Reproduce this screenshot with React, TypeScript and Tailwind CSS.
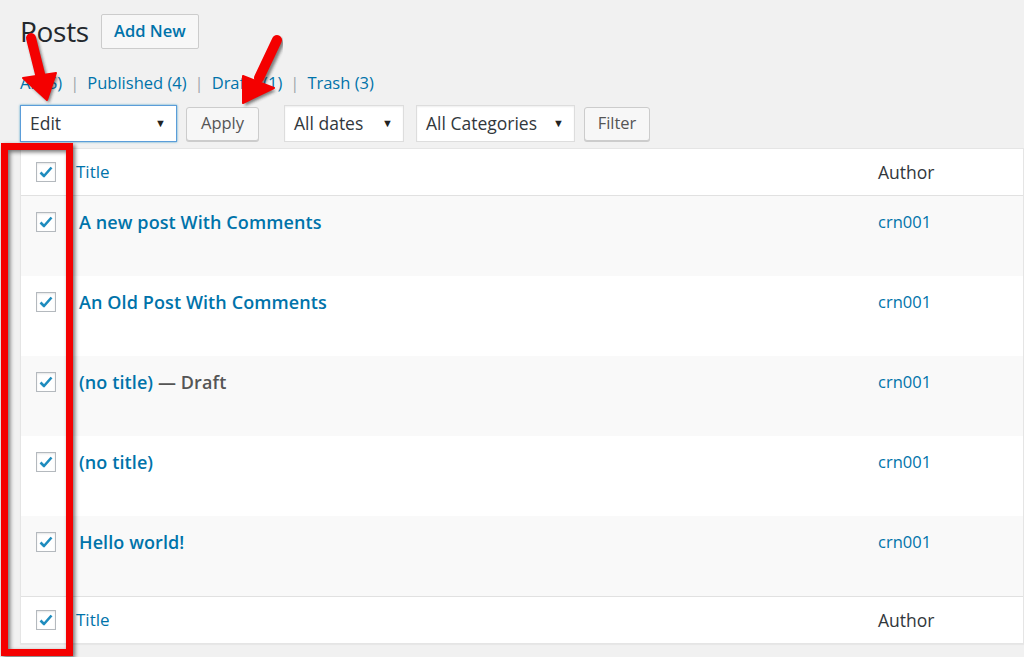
import React from 'react';

const posts = [
  { title: 'A new post With Comments', author: 'crn001' },
  { title: 'An Old Post With Comments', author: 'crn001' },
  { title: '(no title)', state: 'Draft', author: 'crn001' },
  { title: '(no title)', author: 'crn001' },
  { title: 'Hello world!', author: 'crn001' },
];

const Checkbox: React.FC = () => (
  <div className="w-[20px] h-[20px] bg-white border border-[#b4b9be] shadow-[inset_0_1px_2px_rgba(0,0,0,0.1)] flex items-center justify-center">
    <svg width="16" height="16" viewBox="0 0 16 16">
      <path d="M2.5 8.5 L6 12 L13.5 3.5" fill="none" stroke="#1e8cbe" strokeWidth="2.6" strokeLinejoin="round" />
    </svg>
  </div>
);

const Select: React.FC<{ label: string; width: string; focused?: boolean }> = ({ label, width, focused }) => (
  <div
    className={`${width} h-[37px] bg-white flex items-center justify-between pl-[9px] pr-[10px] text-[17.5px] text-[#32373c] ${
      focused ? 'border border-[#5b9dd9] shadow-[0_0_2px_rgba(30,140,190,0.8)]' : 'border border-[#ddd] shadow-[inset_0_1px_2px_rgba(0,0,0,0.07)]'
    }`}
  >
    <span>{label}</span>
    <span className="text-[11px] text-[#222]">▼</span>
  </div>
);

const Button: React.FC<{ label: string; width: string }> = ({ label, width }) => (
  <div className={`${width} h-[34px] bg-[#f7f7f7] border border-[#ccc] rounded-[3px] shadow-[0_1px_0_#ccc] flex items-center justify-center text-[16.5px] text-[#555]`}>
    {label}
  </div>
);

const Arrow: React.FC<{ shaft: string; head: string }> = ({ shaft, head }) => (
  <g>
    <g transform="translate(2,3)" opacity="0.55" filter="url(#blur)">
      <path d={shaft} stroke="#222" strokeWidth="10" strokeLinecap="round" fill="none" />
      <path d={head} fill="#222" />
    </g>
    <path d={shaft} stroke="#f40000" strokeWidth="10" strokeLinecap="round" fill="none" />
    <path d={head} fill="#f40000" stroke="#f40000" strokeWidth="2" strokeLinejoin="round" />
  </g>
);

export default function App() {
  return (
    <div className="relative w-[1024px] h-[657px] overflow-hidden bg-[#f1f1f1] font-['Open_Sans',sans-serif]">
      <div className="pl-[20px] pt-[13px]">
        <div className="flex items-center gap-[12px] h-[36px]">
          <h1 className="text-[28px] leading-none text-[#23282d] tracking-[-0.3px]">Posts</h1>
          <div className="h-[35px] w-[98px] flex items-center justify-center bg-[#f7f7f7] border border-[#ccc] rounded-[2px] text-[16.5px] font-semibold text-[#0073aa]">
            Add New
          </div>
        </div>

        <div className="mt-[22px] flex items-center text-[16.5px] text-[#0073aa] h-[24px]">
          <span>All (5)</span>
          <span className="mx-[8px] text-[#a0a5aa]">|</span>
          <span>Published (4)</span>
          <span className="mx-[8px] text-[#a0a5aa]">|</span>
          <span>Drafts (1)</span>
          <span className="mx-[8px] text-[#a0a5aa]">|</span>
          <span>Trash (3)</span>
        </div>

        <div className="mt-[10px] flex items-center h-[37px]">
          <Select label="Edit" width="w-[157px]" focused />
          <div className="ml-[9px]">
            <Button label="Apply" width="w-[73px]" />
          </div>
          <div className="ml-[25px]">
            <Select label="All dates" width="w-[120px]" />
          </div>
          <div className="ml-[12px]">
            <Select label="All Categories" width="w-[159px]" />
          </div>
          <div className="ml-[9px]">
            <Button label="Filter" width="w-[66px]" />
          </div>
        </div>

        <div className="mt-[6px] bg-white border border-[#e5e5e5] shadow-[0_1px_1px_rgba(0,0,0,0.04)]">
          <div className="h-[47px] flex items-center border-b border-[#e1e1e1]">
            <div className="w-[55px] pl-[15px]">
              <Checkbox />
            </div>
            <div className="flex-1 text-[17px] text-[#0073aa]">Title</div>
            <div className="w-[145px] text-[17.5px] text-[#32373c]">Author</div>
          </div>

          {posts.map((p, i) => (
            <div key={i} className={`h-[80px] flex items-start pt-[14px] ${i % 2 === 0 ? 'bg-[#f9f9f9]' : 'bg-white'}`}>
              <div className="w-[58px] pl-[15px] pt-[2px]">
                <Checkbox />
              </div>
              <div className="flex-1 text-[18px] font-semibold text-[#0073aa] leading-[24px] tracking-[0.1px]">
                {p.title}
                {p.state && <span className="text-[#555]"> — {p.state}</span>}
              </div>
              <div className="w-[145px] text-[16.5px] text-[#0073aa] leading-[24px]">{p.author}</div>
            </div>
          ))}

          <div className="h-[47px] flex items-center border-t border-[#e1e1e1]">
            <div className="w-[55px] pl-[15px]">
              <Checkbox />
            </div>
            <div className="flex-1 text-[17px] text-[#0073aa]">Title</div>
            <div className="w-[145px] text-[17.5px] text-[#32373c]">Author</div>
          </div>
        </div>
      </div>

      {/* annotations */}
      <div className="absolute left-[1px] top-[143px] w-[72px] h-[513px] border-[7px] border-[#f40000] drop-shadow-[2px_2px_2px_rgba(0,0,0,0.55)]" />
      <svg className="absolute left-0 top-0 pointer-events-none" width="1024" height="657">
        <defs>
          <filter id="blur">
            <feGaussianBlur stdDeviation="1.5" />
          </filter>
        </defs>
        <Arrow shaft="M31 38 L41 78" head="M23 78 L56 73 L47 100 Z" />
        <Arrow shaft="M277 40 L259 78" head="M243 76 L274 88 L243 103 Z" />
      </svg>
    </div>
  );
}
